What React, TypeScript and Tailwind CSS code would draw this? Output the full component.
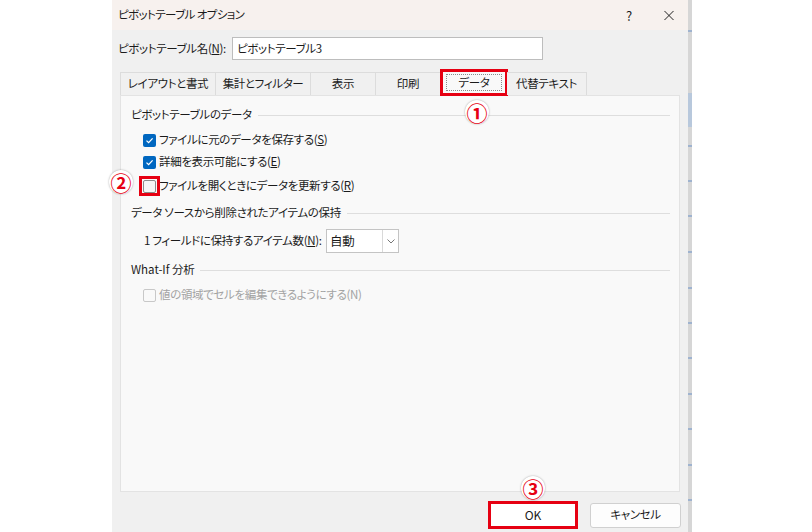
import React from "react";

function Check({ checked, disabled }: { checked?: boolean; disabled?: boolean }) {
  if (checked) {
    return (
      <span className="flex h-[13px] w-[13px] shrink-0 items-center justify-center rounded-[2px] bg-[#0067c0]">
        <svg width="9" height="9" viewBox="0 0 9 9">
          <polyline points="1.5,4.6 3.6,6.6 7.6,2.4" fill="none" stroke="white" strokeWidth="1.3" />
        </svg>
      </span>
    );
  }
  return (
    <span
      className={
        disabled
          ? "block h-[13px] w-[13px] shrink-0 rounded-[2px] border border-[#c8c8c8] bg-[#f9f9f9]"
          : "block h-[13px] w-[13px] shrink-0 rounded-[2px] border border-[#8b8b8b] bg-[#f6f6f6]"
      }
    />
  );
}

function Circled({ ch, className }: { ch: string; className: string }) {
  return (
    <div
      className={
        "absolute flex h-[24px] w-[24px] items-center justify-center rounded-full bg-white text-[21px] font-bold leading-none tracking-normal text-[#e60012] shadow-[0_0_2px_rgba(0,0,0,0.35)] " +
        className
      }
    >
      {ch}
    </div>
  );
}

function Section({ title, className }: { title: React.ReactNode; className?: string }) {
  return (
    <div className={"flex h-[22px] items-center gap-[6px] pl-[10px] pr-[9px] " + (className || "")}>
      <span className="whitespace-nowrap">{title}</span>
      <div className="h-px flex-1 bg-[#dedede]" />
    </div>
  );
}

export default function App() {
  const tabs = ["レイアウトと書式", "集計とフィルター", "表示", "印刷", "データ", "代替テキスト"];
  const widths = ["w-[96px]", "w-[95px]", "w-[65px]", "w-[65px]", "w-[66px]", "w-[80px]"];
  const ticks = [30, 145, 180, 215, 251, 287, 322, 357, 393, 428, 464, 499];
  return (
    <div className="relative flex h-[532px] w-[812px] overflow-hidden bg-white font-['Noto_Sans_CJK_JP','Noto_Sans',sans-serif] text-[11.5px] leading-none tracking-[-0.35px] text-[#1b1b1b] [font-feature-settings:'palt']">
      <div className="w-[112px] shrink-0" />
      {/* Dialog */}
      <div className="relative flex h-full w-[576px] shrink-0 flex-col bg-[#f0f0f0]">
        {/* Title bar */}
        <div className="flex h-[30px] items-center bg-[#f7f1ee] pl-[6px]">
          <span className="whitespace-nowrap tracking-[-0.6px]">ピボットテーブル オプション</span>
          <div className="ml-auto flex items-center">
            <span className="w-[20px] text-center text-[13px]">?</span>
            <div className="ml-[25px] mr-[14px] flex w-[10px] items-center justify-center">
              <svg width="11" height="11" viewBox="0 0 11 11">
                <path d="M0.5 0.5 L10.5 10.5 M10.5 0.5 L0.5 10.5" stroke="#222" strokeWidth="1.1" />
              </svg>
            </div>
          </div>
        </div>
        {/* Name row */}
        <div className="mt-[7px] flex h-[23px] items-center pl-[6px]">
          <span className="w-[114px] shrink-0 whitespace-nowrap">
            ピボットテーブル名(<span className="underline">N</span>):
          </span>
          <div className="flex h-[23px] w-[311px] items-center whitespace-nowrap border border-[#bdbdbd] bg-white pl-[4px]">
            ピボットテーブル3
          </div>
        </div>
        {/* Tabs */}
        <div className="relative z-10 mt-[9px] flex h-[26px] items-end pl-[8px]">
          {tabs.map((t, i) =>
            i === 4 ? (
              <div
                key={t}
                className="-mx-px -mb-px flex h-[27px] w-[68px] items-center justify-center border-[3px] border-[#e60012] bg-[#f9f9f9]"
              >
                <span className="flex h-[17px] w-[56px] items-center justify-center border border-dotted border-[#8a8a8a]">
                  {t}
                </span>
              </div>
            ) : (
              <div
                key={t}
                className={
                  "flex h-[23px] items-center justify-center whitespace-nowrap border-t border-r border-[#dcdcdc] bg-[#f0f0f0] " +
                  (i === 0 ? "border-l " : "") +
                  widths[i]
                }
              >
                {t}
              </div>
            )
          )}
        </div>
        {/* Panel */}
        <div className="mx-[8px] flex h-[397px] flex-col border border-[#e3e3e3] bg-[#f9f9f9] pt-[8px]">
          <Section title="ピボットテーブルのデータ" />
          <div className="mt-[3px] flex h-[22px] items-center gap-[3px] pl-[22px]">
            <Check checked />
            <span className="whitespace-nowrap">
              ファイルに元のデータを保存する(<span className="underline">S</span>)
            </span>
          </div>
          <div className="flex h-[22px] items-center gap-[3px] pl-[22px]">
            <Check checked />
            <span className="whitespace-nowrap">
              詳細を表示可能にする(<span className="underline">E</span>)
            </span>
          </div>
          <div className="mt-[2px] flex h-[22px] items-center gap-[3px] pl-[22px]">
            <span className="relative">
              <Check />
              <span className="absolute -left-[4px] -top-[4px] h-[20px] w-[21px] border-[3px] border-[#e60012]" />
            </span>
            <span className="whitespace-nowrap">
              ファイルを開くときにデータを更新する(<span className="underline">R</span>)
            </span>
          </div>
          <Section title="データ ソースから削除されたアイテムの保持" className="mt-[5px]" />
          <div className="mt-[5px] flex h-[24px] items-center pl-[23px]">
            <span className="w-[182px] shrink-0 whitespace-nowrap">
              1 フィールドに保持するアイテム数(<span className="underline">N</span>):
            </span>
            <div className="flex h-[24px] w-[73px] items-center border border-[#c4c4c4] bg-white">
              <span className="flex-1 pl-[3px] text-[12.5px]">自動</span>
              <div className="flex h-full w-[16px] items-center justify-center border-l border-[#d9d9d9]">
                <svg width="8" height="5" viewBox="0 0 8 5">
                  <polyline points="0.5,0.5 4,4 7.5,0.5" fill="none" stroke="#777" strokeWidth="1" />
                </svg>
              </div>
            </div>
          </div>
          <Section
            title={
              <>
                <span className="tracking-normal">What-If </span>分析
              </>
            }
            className="mt-[6px]"
          />
          <div className="mt-[3px] flex h-[22px] items-center gap-[3px] pl-[22px] text-[#a3a3a3]">
            <Check disabled />
            <span className="whitespace-nowrap">値の領域でセルを編集できるようにする(N)</span>
          </div>
        </div>
        {/* Buttons */}
        <div className="mt-[9px] flex items-center justify-end gap-[12px] pr-[7px]">
          <div className="flex h-[28px] w-[90px] items-center justify-center border-[3px] border-[#e60012] bg-white text-[12px] tracking-normal">
            OK
          </div>
          <div className="flex h-[25px] w-[91px] items-center justify-center whitespace-nowrap rounded-[3px] border border-[#d0d0d0] bg-[#fdfdfd]">
            キャンセル
          </div>
        </div>
        {/* Annotations */}
        <Circled ch="①" className="left-[353px] top-[100px]" />
        <Circled ch="②" className="left-[-3px] top-[170px]" />
        <Circled ch="③" className="left-[409px] top-[476px]" />
      </div>
      {/* Sheet strip behind */}
      <div className="relative h-full w-[4px] shrink-0 bg-[#d6d6d6]">
        <div className="absolute left-0 top-[93px] h-[34px] w-[4px] bg-[#b8c8dc]" />
        {ticks.map((y) => (
          <div key={y} className="absolute left-0 h-[2px] w-[4px] bg-[#9fb3cf]" style={{ top: y }} />
        ))}
      </div>
    </div>
  );
}
